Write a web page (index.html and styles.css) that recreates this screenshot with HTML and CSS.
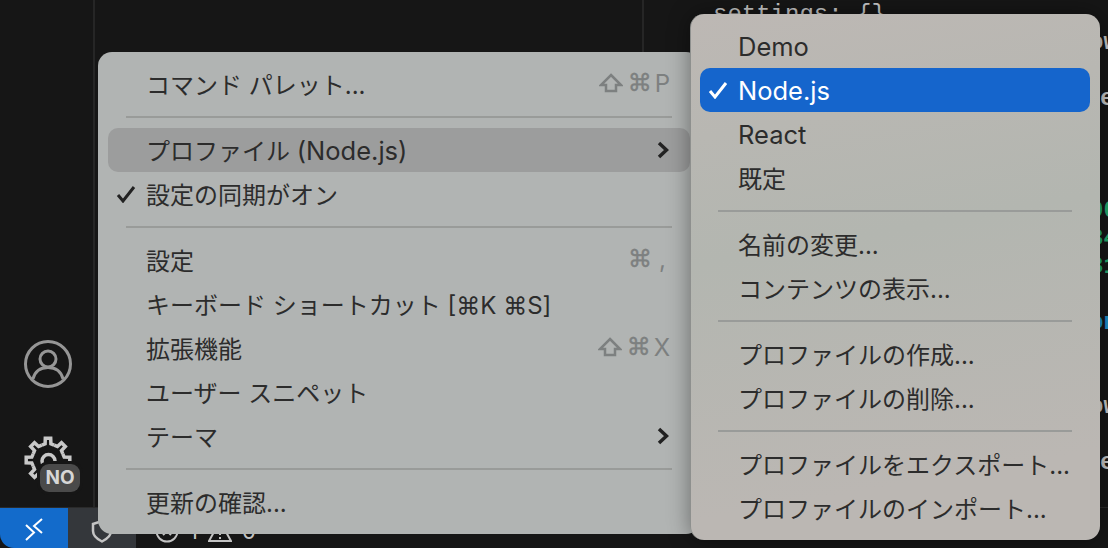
FILE: index.html
```html
<html lang="ja">
  <head>
    <meta charset="UTF-8" />
    <title>Profiles menu</title>
    <link rel="stylesheet" href="styles.css">
  </head>
  <body>
    <div class="workbench">
      <div class="main">
        <div class="activity">
          <svg class="account" viewBox="0 0 48 48">
            <circle cx="24" cy="24" r="22.500" />
            <circle cx="24" cy="19" r="8" />
            <path d="M9 39c2-8 8-11.500 15-11.500s13 3.500 15 11.500" />
          </svg>
          <div class="manage">
            <svg class="gear" viewBox="0 0 48 48">
              <defs>
                <polyline id="tooth" points="17.900,9.200 21.100,7.800 21.300,2.200 26.700,2.200 26.900,7.800 30.100,9.200" />
              </defs>
              <use href="#tooth" />
              <use href="#tooth" transform="rotate(45 24 24)" />
              <use href="#tooth" transform="rotate(90 24 24)" />
              <use href="#tooth" transform="rotate(135 24 24)" />
              <use href="#tooth" transform="rotate(180 24 24)" />
              <use href="#tooth" transform="rotate(225 24 24)" />
              <use href="#tooth" transform="rotate(270 24 24)" />
              <use href="#tooth" transform="rotate(315 24 24)" />
              <circle cx="24.500" cy="25" r="6.500" />
            </svg>
            <span class="badge">NO</span>
          </div>
        </div>
        <div class="sidebar"></div>
        <div class="editor">
          <div class="line">settings: {}</div>
          <div class="line frag">ow</div>
          <div class="line"></div>
          <div class="line frag frag-word">er</div>
          <div class="line"></div>
          <div class="line"></div>
          <div class="line"></div>
          <div class="line frag green">00</div>
          <div class="line frag green">34</div>
          <div class="line frag green">31</div>
          <div class="line"></div>
          <div class="line frag blue">on</div>
          <div class="line"></div>
          <div class="line"></div>
          <div class="line frag">ow</div>
          <div class="line"></div>
          <div class="line frag frag-word">er</div>
        </div>
      </div>
      <div class="statusbar">
        <div class="remote">
          <svg width="26" height="26" viewBox="0 0 26 26">
            <path d="M5 10l8 7.500-8 7.500M21 4l-8 7 8 7" />
          </svg>
        </div>
        <div class="shield">
          <svg width="22" height="24" viewBox="0 0 22 24">
            <path d="M11 2l9 3v7c0 5-4 8-9 10.500C6 20 2 17 2 12V5z" />
          </svg>
        </div>
        <div class="problems">
          <svg width="24" height="24" viewBox="0 0 24 24">
            <circle cx="12" cy="12" r="10.500" />
            <path d="M8 8l8 8M16 8l-8 8" />
          </svg>
          <span>1</span>
          <svg width="24" height="24" viewBox="0 0 24 24">
            <path d="M12 2l11 20H1zM12 9v7M12 18v2" />
          </svg>
          <span>0</span>
        </div>
      </div>
    </div>

    <div class="menu menu-main">
      <div class="row">
        <span>コマンド パレット...</span>
        <span class="keys">
          <svg class="shift" viewBox="0 0 24 20"><path d="M12 2l10 10h-5v6H7v-6H2z" /></svg>
          <i class="cmd">⌘</i><i>P</i>
        </span>
      </div>
      <div class="sep"></div>
      <div class="row row-hover">
        <span>プロファイル <span class="latin">(Node.js)</span></span>
        <svg class="chevron" viewBox="0 0 12 18"><path d="M2 2l7.500 7-7.500 7" /></svg>
      </div>
      <div class="row">
        <svg class="check" viewBox="0 0 20 18"><path d="M2 10l5 6L18 2" /></svg>
        <span>設定の同期がオン</span>
      </div>
      <div class="sep"></div>
      <div class="row">
        <span>設定</span>
        <span class="keys"><i class="cmd">⌘</i><i class="comma">,</i></span>
      </div>
      <div class="row"><span>キーボード ショートカット [⌘K ⌘S]</span></div>
      <div class="row">
        <span>拡張機能</span>
        <span class="keys">
          <svg class="shift" viewBox="0 0 24 20"><path d="M12 2l10 10h-5v6H7v-6H2z" /></svg>
          <i class="cmd">⌘</i><i>X</i>
        </span>
      </div>
      <div class="row"><span>ユーザー スニペット</span></div>
      <div class="row">
        <span>テーマ</span>
        <svg class="chevron" viewBox="0 0 12 18"><path d="M2 2l7.500 7-7.500 7" /></svg>
      </div>
      <div class="sep"></div>
      <div class="row"><span>更新の確認...</span></div>
    </div>

    <div class="menu menu-sub">
      <div class="row"><span class="latin latin-only">Demo</span></div>
      <div class="row row-active">
        <svg class="check" viewBox="0 0 20 18"><path d="M2 10l5 6L18 2" /></svg>
        <span class="latin latin-only">Node.js</span>
      </div>
      <div class="row"><span class="latin latin-only">React</span></div>
      <div class="row"><span>既定</span></div>
      <div class="sep"></div>
      <div class="row"><span>名前の変更...</span></div>
      <div class="row"><span>コンテンツの表示...</span></div>
      <div class="sep"></div>
      <div class="row"><span>プロファイルの作成...</span></div>
      <div class="row"><span>プロファイルの削除...</span></div>
      <div class="sep"></div>
      <div class="row"><span>プロファイルをエクスポート...</span></div>
      <div class="row"><span>プロファイルのインポート...</span></div>
    </div>
  </body>
</html>
```

FILE: styles.css
```css
body {
  margin: 0;
  height: 548px;
  overflow: hidden;
  background-color: #161616;
  font-family: Inter, "Noto Sans CJK JP", sans-serif;
}
.workbench {
  display: flex;
  flex-direction: column;
  height: 548px;
}
.main {
  display: flex;
  height: 508px;
}
.activity {
  width: 95px;
  box-sizing: border-box;
  padding: 0 0 24px 3px;
  display: flex;
  flex-direction: column;
  justify-content: flex-end;
  align-items: center;
  gap: 48px;
  border-right: 2px solid #262626;
}
.account {
  width: 48px;
  height: 48px;
  fill: none;
  stroke: #969696;
  stroke-width: 3;
}
.manage {
  position: relative;
  width: 48px;
  height: 48px;
}
.gear {
  width: 48px;
  height: 48px;
  fill: none;
  stroke: #c8c8c8;
  stroke-width: 3.500;
}
.badge {
  position: absolute;
  left: 16px;
  top: 28px;
  width: 40px;
  height: 28px;
  border-radius: 9px;
  background-color: #4a4a4a;
  box-shadow: 0 0 0 3px #161616;
  color: #d6d6d6;
  font-size: 19px;
  font-weight: 700;
  line-height: 28px;
  text-align: center;
}
.sidebar {
  width: 547px;
  border-right: 2px solid #262626;
}
.editor {
  flex: 1;
  padding: 1px 0 0 69px;
  color: #c4c4c4;
  font-family: "Liberation Mono", monospace;
  font-size: 24px;
  line-height: 28px;
  overflow: hidden;
}
.line {
  height: 28px;
  white-space: nowrap;
}
.frag {
  padding-left: 376px;
  font-weight: 700;
}
.frag-word {
  padding-left: 387px;
}
.green {
  color: #23a76b;
}
.blue {
  color: #1c8fc6;
}
.statusbar {
  display: flex;
  height: 40px;
  background-color: #161616;
  box-shadow: 0 -1px 0 #2a2a2a;
}
.remote {
  width: 68px;
  display: flex;
  align-items: center;
  justify-content: center;
  background-color: #136bcb;
  border-bottom-left-radius: 14px;
}
.remote svg {
  fill: none;
  stroke: #fff;
  stroke-width: 2;
}
.shield {
  width: 68px;
  padding-top: 6px;
  box-sizing: border-box;
  display: flex;
  align-items: center;
  justify-content: center;
  background-color: #34373b;
}
.shield svg {
  fill: none;
  stroke: #c4c4c4;
  stroke-width: 2.500;
}
.problems {
  display: flex;
  align-items: center;
  gap: 10px;
  padding: 5px 0 0 19px;
  color: #c4c4c4;
  font-size: 22px;
}
.problems svg {
  fill: none;
  stroke: #c4c4c4;
  stroke-width: 2;
}
.menu {
  position: absolute;
  box-sizing: border-box;
  padding: 10px;
  border-radius: 14px;
  color: #2c2c2c;
  font-size: 24px;
}
.menu-main {
  left: 98px;
  top: 52px;
  width: 602px;
  height: 482px;
  background: #b1b4b3;
}
.menu-sub {
  left: 690px;
  top: 14px;
  width: 410px;
  height: 526px;
  background: linear-gradient(170deg, #bdb8b4 0%, #b3b6b0 42%, #bbb7b3 85%);
  box-shadow: 0 0 22px rgba(0, 0, 0, 0.4);
  border-left: 1px solid #8e908e;
  padding-left: 9px;
}
.row {
  position: relative;
  display: flex;
  align-items: center;
  justify-content: space-between;
  box-sizing: border-box;
  height: 44px;
  padding: 0 20px 2px 38px;
  border-radius: 10px;
  white-space: nowrap;
}
.row-hover {
  background: #9c9d9d;
}
.row-active {
  background: #1565cc;
  color: #fff;
}
.latin {
  font-size: 25.500px;
}
.latin-only {
  margin-top: 2px;
}
.sep {
  height: 2px;
  margin: 10px 18px;
  background-color: #999b99;
}
.keys {
  display: flex;
  align-items: center;
  gap: 3px;
  color: #7d8080;
}
.keys i {
  font-style: normal;
}
.cmd {
  font-family: "DejaVu Sans", sans-serif;
  -webkit-text-stroke: 0.4px #7d8080;
}
.shift {
  width: 24px;
  height: 20px;
  margin-right: 2px;
  fill: none;
  stroke: #7d8080;
  stroke-width: 2.500;
}
.comma {
  width: 15px;
  text-align: center;
}
.chevron {
  width: 12px;
  height: 18px;
  margin: 2px 1px 0 0;
  fill: none;
  stroke: #222;
  stroke-width: 3.500;
}
.check {
  position: absolute;
  left: 8px;
  top: 13px;
  width: 20px;
  height: 18px;
  fill: none;
  stroke: #222;
  stroke-width: 3;
}
.row-active .check {
  stroke: #fff;
}
```
